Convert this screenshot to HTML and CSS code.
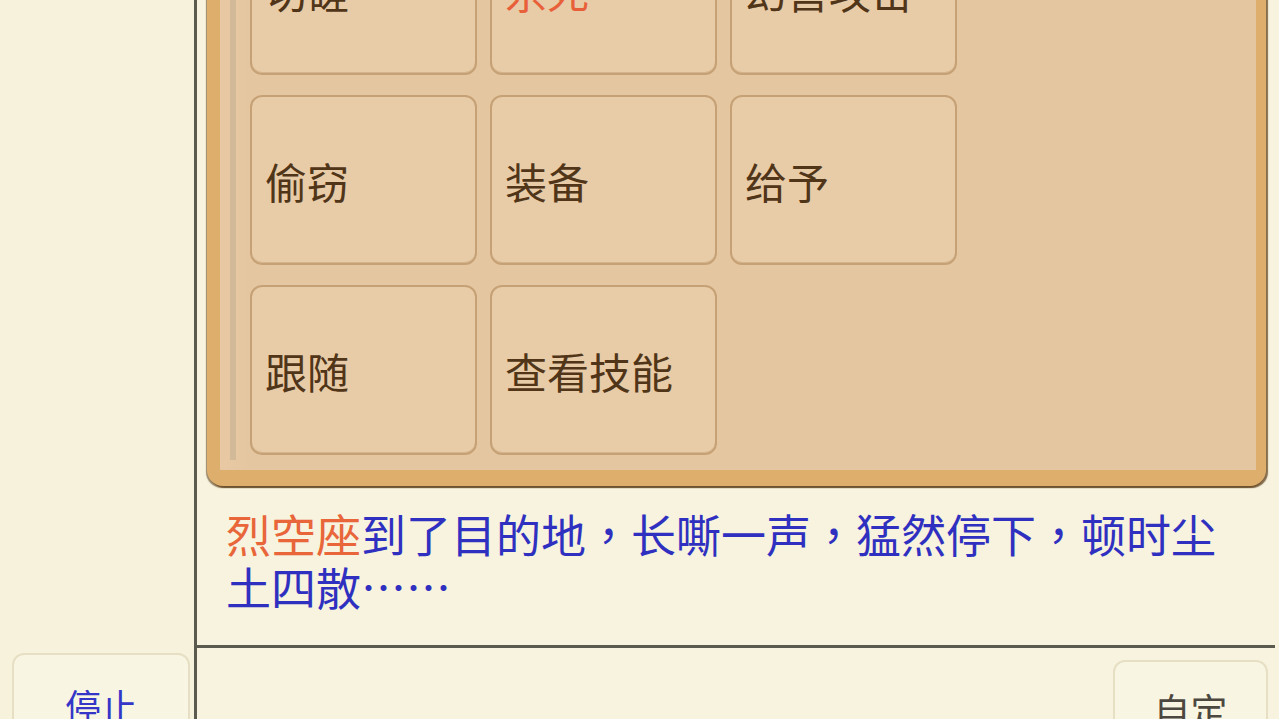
FILE: index.html
```html
<!DOCTYPE html>
<html lang="zh-CN">
<head>
<meta charset="utf-8">
<title>行动</title>
<link rel="stylesheet" href="styles.css">
</head>
<body>
<div class="app">
  <aside class="sidebar">
    <div class="side-btn">停止</div>
  </aside>
  <div class="vline"></div>
  <main class="main">
    <section class="panel">
      <div class="panel-inner">
        <div class="track"></div>
        <div class="grid">
          <div class="act">切磋</div>
          <div class="act act-red">杀死</div>
          <div class="act">幻兽攻击</div>
          <div class="act">偷窃</div>
          <div class="act">装备</div>
          <div class="act">给予</div>
          <div class="act">跟随</div>
          <div class="act">查看技能</div>
        </div>
      </div>
    </section>
    <p class="message" lang="zh-TW"><span class="name">烈空座</span><span class="msg">到了目的地，长嘶一声，猛然停下，顿时尘土四散……</span></p>
    <div class="hline"></div>
    <div class="bottombar">
      <div class="custom-btn">自定</div>
    </div>
  </main>
</div>
</body>
</html>
```

FILE: styles.css
```css
html, body {
  margin: 0;
  padding: 0;
  width: 1279px;
  height: 719px;
  overflow: hidden;
  background: #f7f3de;
  font-family: "Noto Sans CJK SC", "Noto Sans", sans-serif;
}

.app {
  display: grid;
  grid-template-columns: 194px 3px 1fr;
  height: 719px;
  overflow: hidden;
}

.sidebar {
  background: #f6f2dc;
  display: flex;
  flex-direction: column;
  justify-content: flex-end;
  padding: 0 4px 0 12px;
  overflow: hidden;
}

.side-btn {
  box-sizing: border-box;
  height: 100px;
  margin-bottom: -34px;
  border: 2px solid #e6dfc3;
  border-radius: 12px;
  background: #f8f5e3;
  color: #3535c8;
  font-size: 36px;
  line-height: 36px;
  padding-top: 32px;
  text-align: center;
}

.vline {
  background: #5a5a4e;
}

.main {
  display: flex;
  flex-direction: column;
  overflow: hidden;
  min-width: 0;
}

.panel {
  flex: none;
  margin: -123px 13px 0 10px;
  border: 13px solid #deaf6c;
  border-right-width: 10px;
  border-bottom-width: 16px;
  border-radius: 16px;
  background: #e4c6a0;
  box-shadow: 2px 2px 1px rgba(95, 65, 30, 0.75), -1px 2px 1px rgba(95, 65, 30, 0.6);
}

.panel-inner {
  display: flex;
  padding: 15px 0 15px 10px;
  background: linear-gradient(90deg, #e8c9a4 0, #e4c6a0 30px);
  border-radius: 4px;
}

.track {
  width: 6px;
  background: #d2b997;
  margin-bottom: -5px;
  flex: none;
}

.grid {
  margin-left: 14px;
  display: grid;
  grid-template-columns: repeat(3, 227px);
  grid-auto-rows: 170px;
  column-gap: 13px;
  row-gap: 20px;
}

.act {
  box-sizing: border-box;
  border: 2px solid #c6a175;
  border-radius: 12px;
  background: #e8cba7;
  box-shadow: inset 0 -1px 0 rgba(150, 110, 60, 0.25);
  color: #503518;
  font-size: 42px;
  display: flex;
  align-items: center;
  padding-left: 13px;
}

.act-red {
  color: #e8603a;
}

.message {
  margin: 0;
  padding: 21px 53px 32px 29px;
  font-family: "Noto Sans CJK TC", "Noto Sans CJK SC", sans-serif;
  font-size: 45px;
  line-height: 53px;
  height: 106px;
  box-sizing: content-box;
}

.name {
  color: #e8663a;
}

.msg {
  color: #3030c0;
}

.hline {
  flex: none;
  height: 3px;
  background: #5a5a4e;
  margin-right: 4px;
}

.bottombar {
  display: flex;
  justify-content: flex-end;
  padding: 12px 11px 0 0;
}

.custom-btn {
  box-sizing: border-box;
  width: 155px;
  height: 100px;
  border: 2px solid #e6dfc3;
  border-radius: 12px;
  background: #f8f5e3;
  color: #4c4840;
  font-size: 37px;
  line-height: 37px;
  padding-top: 30px;
  text-align: center;
}
```
